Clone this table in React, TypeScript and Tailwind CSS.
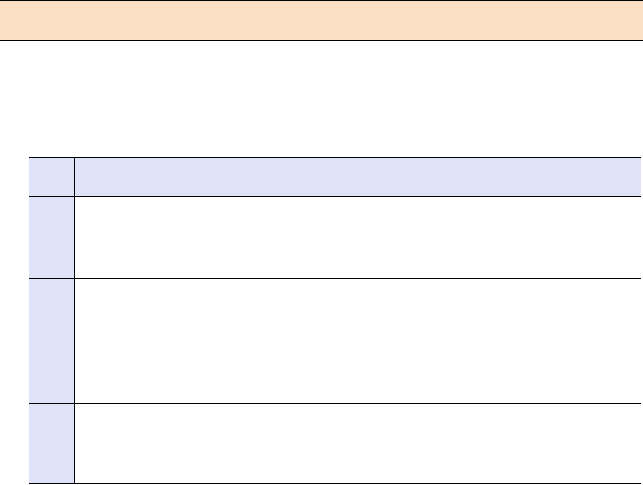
import React from "react";

const rows = [
  { h: "h-[39px]", header: true },
  { h: "h-[82px]", header: false },
  { h: "h-[125px]", header: false },
  { h: "h-[80px]", header: false },
];

export default function App() {
  return (
    <div className="w-[643px] h-[485px] bg-white overflow-hidden" style={{ fontFamily: '"Liberation Sans", Arial, sans-serif' }}>
      <div className="h-[41px] border-y border-black bg-[#fddfc5]" />
      <div className="mt-[116px] ml-[29px] mr-[2px] border-t border-black">
        {rows.map((r, i) => (
          <div key={i} className={`flex ${r.h} border-b border-black`}>
            <div className="w-[46px] shrink-0 bg-[#dfe3f7] border-r border-black" />
            <div className={`flex-1 ${r.header ? "bg-[#dfe3f7]" : "bg-white"}`} />
          </div>
        ))}
      </div>
    </div>
  );
}
